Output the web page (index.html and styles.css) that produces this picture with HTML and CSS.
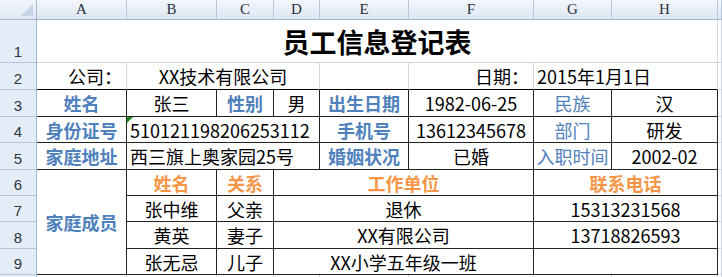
FILE: index.html
```html
<!DOCTYPE html>
<html lang="zh-CN">
<head>
<meta charset="utf-8">
<title>员工信息登记表</title>
<link rel="stylesheet" href="styles.css">
</head>
<body>
<div class="sheet">
  <div class="corner"><svg class="corner-tri" width="12" height="12" viewBox="0 0 12 12"><polygon points="12,0 12,12 0,12" fill="#c4d3e6"/></svg></div>
  <div class="ch">A</div><div class="ch">B</div><div class="ch">C</div><div class="ch">D</div>
  <div class="ch">E</div><div class="ch">F</div><div class="ch">G</div><div class="ch">H</div><div class="ch"></div>

  <div class="rh">1</div>
  <div class="c title span8">员工信息登记表</div>
  <div class="c"></div>

  <div class="rh">2</div>
  <div class="c above right">公司：</div>
  <div class="c above span3">XX技术有限公司</div>
  <div class="c above"></div>
  <div class="c above right">日期：</div>
  <div class="c above span2 left">2015年1月1日</div>
  <div class="c"></div>

  <div class="rh">3</div>
  <div class="c bx lbl">姓名</div>
  <div class="c bx">张三</div>
  <div class="c bx lbl">性别</div>
  <div class="c bx">男</div>
  <div class="c bx lbl">出生日期</div>
  <div class="c bx">1982-06-25</div>
  <div class="c bx lbl-thin">民族</div>
  <div class="c bx">汉</div>
  <div class="c"></div>

  <div class="rh">4</div>
  <div class="c bx lbl">身份证号</div>
  <div class="c bx span3 left flagged">510121198206253112</div>
  <div class="c bx lbl">手机号</div>
  <div class="c bx">13612345678</div>
  <div class="c bx lbl-thin">部门</div>
  <div class="c bx">研发</div>
  <div class="c"></div>

  <div class="rh">5</div>
  <div class="c bx lbl">家庭地址</div>
  <div class="c bx span3 left">西三旗上奥家园25号</div>
  <div class="c bx lbl">婚姻状况</div>
  <div class="c bx">已婚</div>
  <div class="c bx lbl-thin">入职时间</div>
  <div class="c bx">2002-02</div>
  <div class="c"></div>

  <div class="rh">6</div>
  <div class="c bx lbl rspan4">家庭成员</div>
  <div class="c bx head">姓名</div>
  <div class="c bx head">关系</div>
  <div class="c bx head span3">工作单位</div>
  <div class="c bx head span2">联系电话</div>
  <div class="c"></div>

  <div class="rh">7</div>
  <div class="c bx">张中维</div>
  <div class="c bx">父亲</div>
  <div class="c bx span3">退休</div>
  <div class="c bx span2">15313231568</div>
  <div class="c"></div>

  <div class="rh">8</div>
  <div class="c bx">黄英</div>
  <div class="c bx">妻子</div>
  <div class="c bx span3">XX有限公司</div>
  <div class="c bx span2">13718826593</div>
  <div class="c"></div>

  <div class="rh">9</div>
  <div class="c bx">张无忌</div>
  <div class="c bx">儿子</div>
  <div class="c bx span3">XX小学五年级一班</div>
  <div class="c bx span2"></div>
  <div class="c"></div>

  <div class="rh"></div>
  <div class="c"></div><div class="c"></div><div class="c"></div><div class="c"></div>
  <div class="c"></div><div class="c"></div><div class="c"></div><div class="c"></div><div class="c"></div>
</div>
</body>
</html>
```

FILE: styles.css
```css
html, body {
  margin: 0;
  padding: 0;
  background: #ffffff;
}

.sheet {
  display: grid;
  grid-template-columns: 37px 90px 90px 57px 46px 89px 125px 78px 106px 1fr;
  grid-template-rows: 20px 43px 27px 27px 26px 27px 26px 26px 27px 26px 1fr;
  width: 722px;
  height: 277px;
  overflow: hidden;
  font-family: "Noto Sans CJK SC", sans-serif;
  font-size: 18px;
  color: #000;
}

.sheet > div {
  box-sizing: border-box;
  display: flex;
  align-items: center;
  justify-content: center;
  white-space: nowrap;
  line-height: 1;
  min-width: 0;
}

.corner {
  position: relative;
  background: linear-gradient(#f2f6fb, #dfe8f4);
  border-right: 1px solid #9eb6ce;
  border-bottom: 1px solid #9eb6ce;
}

.corner-tri {
  position: absolute;
  left: 21px;
  top: 4px;
}

.ch {
  background: linear-gradient(#f4f7fc, #dde6f2);
  border-right: 1px solid #b8c9de;
  border-bottom: 1px solid #9eb6ce;
  font-family: "Liberation Serif", "DejaVu Serif", serif;
  font-size: 15px;
  color: #27313d;
}

.rh {
  background: #e4ecf7;
  border-right: 1px solid #9eb6ce;
  border-bottom: 1px solid #b3c6de;
  font-family: "Liberation Sans", Arial, sans-serif;
  font-size: 15px;
  color: #2d3640;
  align-items: flex-end !important;
  padding-bottom: 3px;
}

.c {
  border-right: 1px solid #d0d7e5;
  border-bottom: 1px solid #d0d7e5;
}

.above {
  border-bottom-color: #000;
}

.bx {
  border-right: 1px solid #222;
  border-bottom: 1px solid #222;
}

.span8 { grid-column: span 8; }
.span3 { grid-column: span 3; }
.span2 { grid-column: span 2; }
.rspan4 { grid-row: span 4; }

.right {
  justify-content: flex-end !important;
  padding-right: 4px;
}

.left {
  justify-content: flex-start !important;
  padding-left: 3px;
}

.title {
  font-size: 27px;
  font-weight: bold;
  padding-top: 1px;
}

.lbl {
  color: #4f81bd;
  font-weight: bold;
}

.lbl-thin {
  color: #4f81bd;
}

.head {
  color: #f79646;
  font-weight: bold;
}

.flagged {
  position: relative;
}

.flagged::before {
  content: "";
  position: absolute;
  left: 0;
  top: 0;
  border-top: 6px solid #1f8a1f;
  border-right: 6px solid transparent;
}
```
